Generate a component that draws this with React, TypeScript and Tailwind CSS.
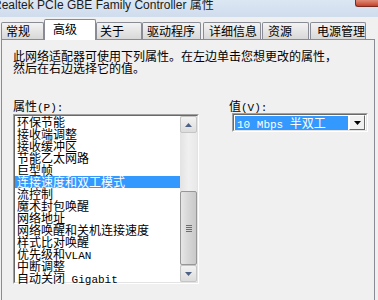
import React from 'react';

const cjk = "font-['Noto_Sans_CJK_SC',sans-serif]";
const mono = "font-['Liberation_Mono','Noto_Sans_CJK_SC',monospace] text-[11px]";

const tabs = [
  { label: '常规', w: 'w-[43px]', pl: 'pl-[4px]' },
  { label: '高级', w: 'w-[52px]', pl: 'pl-[8px]', active: true },
  { label: '关于', w: 'w-[46px]', pl: 'pl-[3px]' },
  { label: '驱动程序', w: 'w-[59px]', pl: 'pl-[4px]', gap: 'mr-[2px]' },
  { label: '详细信息', w: 'w-[58px]', pl: 'pl-[5px]', gap: 'mr-[1px]' },
  { label: '资源', w: 'w-[47px]', pl: 'pl-[5px]', gap: 'mr-[1px]' },
  { label: '电源管理', w: 'w-[56px]', pl: 'pl-[6px]' },
];

const Lat: React.FC<{ children: React.ReactNode }> = ({ children }) => (
  <span className={mono}>{children}</span>
);

const items: React.ReactNode[] = [
  '环保节能',
  '接收端调整',
  '接收缓冲区',
  '节能乙太网路',
  '巨型帧',
  '连接速度和双工模式',
  '流控制',
  '魔术封包唤醒',
  '网络地址',
  '网络唤醒和关机连接速度',
  '样式比对唤醒',
  <>优先级和<Lat>VLAN</Lat></>,
  '中断调整',
  <>自动关闭<Lat> Gigabit</Lat></>,
];

const Arrow: React.FC<{ down?: boolean }> = ({ down }) => (
  <svg width="7" height="4" viewBox="0 0 7 4" className={down ? '' : 'rotate-180'}>
    <path d="M0 0h7L3.5 4z" fill="#4d6185" />
  </svg>
);

const Scrollbar: React.FC = () => (
  <div className="w-[17px] h-full flex flex-col bg-gradient-to-r from-[#e3e3e3] via-[#f0f0f0] to-[#e8e8e8]">
    <div className="h-[17px] flex items-center justify-center border border-[#c5c5c5] rounded-[2px] bg-gradient-to-b from-[#f3f3f3] to-[#dcdcdc]">
      <Arrow />
    </div>
    <div className="h-[58px]" />
    <div className="h-[74px] border border-[#979797] rounded-[2px] bg-gradient-to-r from-[#e6e6e6] via-[#d6d6d6] to-[#c9c9c9] flex items-center justify-center">
      <div className="flex flex-col gap-[1px]">
        <div className="w-[6px] h-[1px] bg-[#6d6d6d]" />
        <div className="w-[6px] h-[1px] bg-[#6d6d6d]" />
        <div className="w-[6px] h-[1px] bg-[#6d6d6d]" />
        <div className="w-[6px] h-[1px] bg-[#6d6d6d]" />
      </div>
    </div>
    <div className="flex-1" />
    <div className="h-[17px] flex items-center justify-center border border-[#c5c5c5] rounded-[2px] bg-gradient-to-b from-[#f3f3f3] to-[#dcdcdc]">
      <Arrow down />
    </div>
  </div>
);

export default function App() {
  return (
    <div className={`w-[378px] h-[300px] overflow-hidden bg-[#f0f0f0] relative text-black ${cjk}`}>
      {/* title bar */}
      <div className="h-[17px] bg-gradient-to-b from-[#dce7f4] to-[#cfdcec] overflow-hidden">
        <div className="-ml-[7px] -mt-[3px] whitespace-nowrap font-['Liberation_Sans','Noto_Sans_CJK_SC',sans-serif] text-[12px] leading-[16px] text-[#1b1b1b]">
          Realtek PCIe GBE Family Controller 属性
        </div>
      </div>
      <div className="absolute top-0 right-0 w-[23px] h-[7px] rounded-bl-[3px] bg-gradient-to-b from-[#e08a78] to-[#c4402a] border-l border-b border-[#7a2a1e]" />

      {/* tabs */}
      <div className="h-[22px] flex items-end pl-[1px] text-[12px] leading-[14px]">
        {tabs.map((t) => (
          <div
            key={t.label}
            className={`${t.w} ${t.pl} ${t.gap ?? ''} border border-b-0 border-[#898c95] rounded-t-[2px] ${
              t.active ? 'h-[20px] bg-white pt-[2px] relative z-10 -mb-[1px] h-[21px]' : 'h-[17px] pt-[1px] bg-gradient-to-b from-[#f3f3f3] to-[#d8d8d8]'
            }`}
          >
            {t.label}
          </div>
        ))}
      </div>

      {/* panel */}
      <div className="ml-[1px] mr-[3px] h-[262px] border border-[#898c95] bg-[#f0f0f0]">
        <div className="pl-[11px] pt-[10px] text-[12px] leading-[12px] whitespace-nowrap">
          <div>此网络适配器可使用下列属性。在左边单击您想更改的属性，</div>
          <div>然后在右边选择它的值。</div>
        </div>

        <div className="flex mt-[26px]">
          <div className="pl-[11px]">
            <div className="text-[12px] leading-[12px] h-[14px]">
              属性<Lat>(P):</Lat>
            </div>
            <div className="w-[186px] h-[170px] border border-[#a0a0a0] border-r-white border-b-white">
              <div className="h-full flex bg-white border border-[#696969] border-r-[#e3e3e3] border-b-[#e3e3e3]">
                <div className="flex-1 pt-[0px]">
                  {items.map((it, i) => (
                    <div
                      key={i}
                      className={`h-[12px] leading-[12px] text-[12px] pl-[2px] whitespace-nowrap ${
                        i === 5 ? 'bg-[#3399ff] text-white' : ''
                      }`}
                    >
                      {it}
                    </div>
                  ))}
                </div>
                <Scrollbar />
              </div>
            </div>
          </div>

          <div className="ml-[30px]">
            <div className="text-[12px] leading-[12px] h-[13px] pl-[0px]">
              值<Lat>(V):</Lat>
            </div>
            <div className="ml-[3px] w-[136px] h-[19px] border border-[#a0a0a0] border-r-white border-b-white">
              <div className="h-full flex items-center bg-white border border-[#696969] border-r-[#e3e3e3] border-b-[#e3e3e3] pl-[1px] pr-[1px]">
                <div className="flex-1 h-[14px] bg-[#3399ff] text-white text-[12px] leading-[14px] pl-[2px] whitespace-nowrap">
                  <Lat>10 Mbps </Lat>半双工
                </div>
                <div className="w-[16px] h-[15px] ml-[1px] bg-[#f0f0f0] border border-white border-r-[#696969] border-b-[#696969] flex items-center justify-center">
                  <svg width="7" height="4" viewBox="0 0 7 4">
                    <path d="M0 0h7L3.5 4z" fill="#000" />
                  </svg>
                </div>
              </div>
            </div>
          </div>
        </div>
      </div>
    </div>
  );
}
